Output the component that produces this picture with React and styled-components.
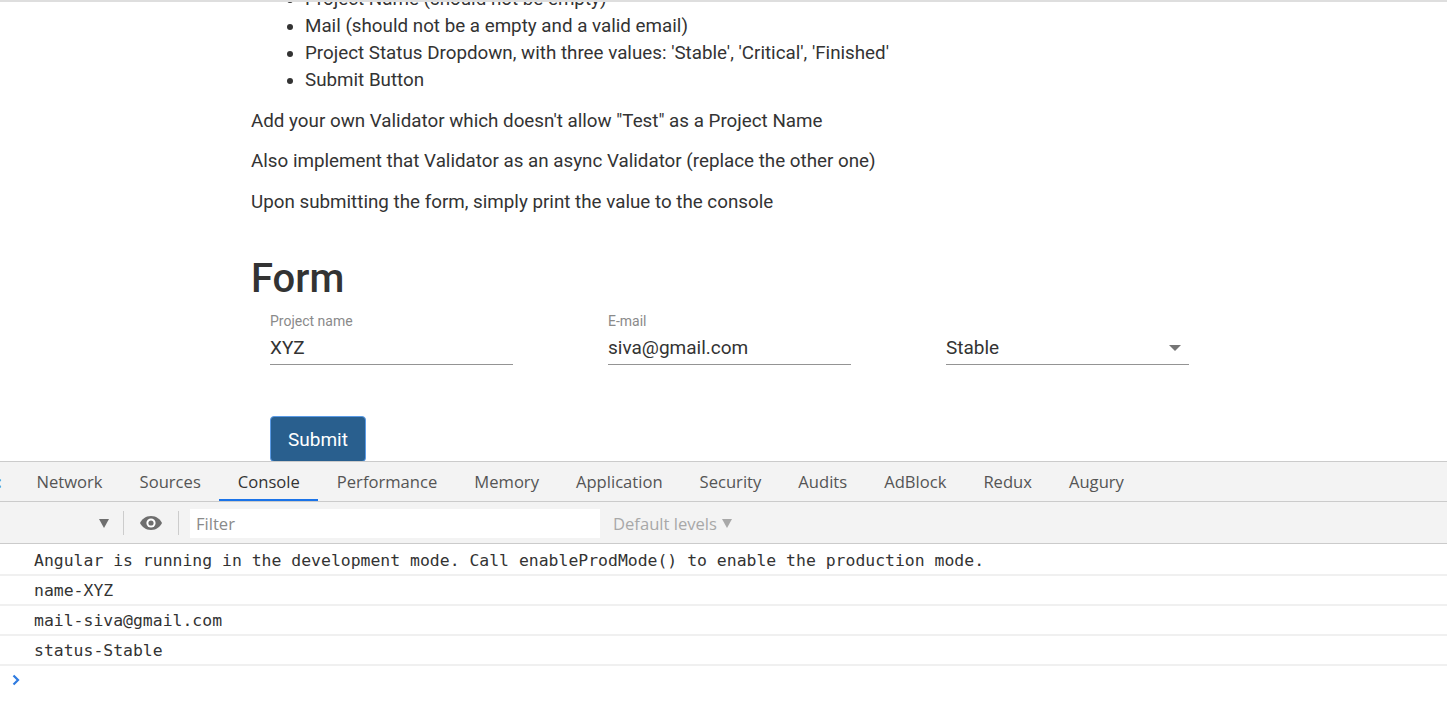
import React from "react";
import styled, { createGlobalStyle } from "styled-components";

const GlobalStyle = createGlobalStyle`
  html, body {
    margin: 0;
    padding: 0;
    background: #fff;
  }
  * {
    box-sizing: border-box;
  }
`;

const tabs = [
  "Network",
  "Sources",
  "Console",
  "Performance",
  "Memory",
  "Application",
  "Security",
  "Audits",
  "AdBlock",
  "Redux",
  "Augury",
];

const logs = [
  "Angular is running in the development mode. Call enableProdMode() to enable the production mode.",
  "name-XYZ",
  "mail-siva@gmail.com",
  "status-Stable",
];

const EyeIcon = () => (
  <svg width="24" height="16" viewBox="0 0 24 16">
    <path d="M12 1C6.5 1 2.6 4.6 1 8c1.6 3.4 5.5 7 11 7s9.4-3.6 11-7c-1.6-3.4-5.5-7-11-7z" fill="#6e6e6e" />
    <circle cx="12" cy="8" r="4.6" fill="#fff" />
    <circle cx="12" cy="8" r="2.6" fill="#6e6e6e" />
  </svg>
);

const App = () => {
  return (
    <Screen>
      <GlobalStyle />
      <PageView>
        <Content>
          <TaskList>
            <li>Project Name (should not be empty)</li>
            <li>Mail (should not be a empty and a valid email)</li>
            <li>Project Status Dropdown, with three values: 'Stable', 'Critical', 'Finished'</li>
            <li>Submit Button</li>
          </TaskList>
          <Para>Add your own Validator which doesn't allow "Test" as a Project Name</Para>
          <Para>Also implement that Validator as an async Validator (replace the other one)</Para>
          <Para>Upon submitting the form, simply print the value to the console</Para>
          <Heading>Form</Heading>
          <FieldRow>
            <Field>
              <Label>Project name</Label>
              <Value>XYZ</Value>
            </Field>
            <Field>
              <Label>E-mail</Label>
              <Value>siva@gmail.com</Value>
            </Field>
            <Field>
              <Label />
              <Value>
                Stable
                <Caret />
              </Value>
            </Field>
          </FieldRow>
          <SubmitBtn>Submit</SubmitBtn>
        </Content>
      </PageView>

      <DevTools>
        <TabBar>
          <CutIcon>:</CutIcon>
          {tabs.map((t) => (
            <Tab key={t} active={t === "Console"}>
              {t}
            </Tab>
          ))}
        </TabBar>
        <Toolbar>
          <ContextArrow />
          <Divider />
          <EyeBtn>
            <EyeIcon />
          </EyeBtn>
          <Divider />
          <FilterBox>Filter</FilterBox>
          <Levels>
            Default levels <LevelsArrow />
          </Levels>
        </Toolbar>
        <ConsoleList>
          {logs.map((l, i) => (
            <LogRow key={i}>{l}</LogRow>
          ))}
          <PromptRow>
            <svg width="10" height="12" viewBox="0 0 10 12">
              <path d="M2.5 1.5 L7 6 L2.5 10.5" stroke="#2f7be0" strokeWidth="2.2" fill="none" />
            </svg>
          </PromptRow>
        </ConsoleList>
      </DevTools>
    </Screen>
  );
};

export default App;

const Screen = styled.div`
  height: 723px;
  display: flex;
  flex-direction: column;
  overflow: hidden;
`;

const PageView = styled.div`
  height: 461px;
  flex-shrink: 0;
  overflow: hidden;
  border-top: 2px solid #dedede;
  font-family: Roboto, "Liberation Sans", sans-serif;
  color: #333;
`;

const Content = styled.div`
  margin-top: -16px;
  padding-left: 251px;
`;

const TaskList = styled.ul`
  margin: 0;
  padding-left: 54px;
  font-size: 18.8px;
  line-height: 27px;
`;

const Para = styled.p`
  margin: 13.5px 0 0;
  font-size: 18.8px;
  line-height: 27px;
`;

const Heading = styled.h1`
  margin: 39.5px 0 0;
  font-size: 40px;
  font-weight: 500;
  line-height: 48px;
`;

const FieldRow = styled.div`
  display: grid;
  grid-template-columns: repeat(3, 338px);
  padding-left: 19px;
  margin-top: 10px;
`;

const Field = styled.div`
  width: 243px;
  display: flex;
  flex-direction: column;
`;

const Label = styled.div`
  height: 16px;
  font-size: 14px;
  line-height: 16px;
  color: #8a8a8a;
`;

const Value = styled.div`
  position: relative;
  margin-top: 6px;
  padding-bottom: 4px;
  font-size: 19px;
  line-height: 25px;
  color: #333;
  border-bottom: 1px solid #949494;
`;

const Caret = styled.span`
  position: absolute;
  right: 8px;
  top: 10px;
  width: 0;
  height: 0;
  border-left: 6px solid transparent;
  border-right: 6px solid transparent;
  border-top: 6px solid #757575;
`;

const SubmitBtn = styled.button`
  margin: 51px 0 0 19px;
  width: 96px;
  height: 46px;
  border: 1px solid #5b9be6;
  border-radius: 4px;
  background: #295f8e;
  color: #fff;
  font-family: Roboto, "Liberation Sans", sans-serif;
  font-size: 19px;
  padding: 0;
`;

const DevTools = styled.div`
  flex: 1;
  display: flex;
  flex-direction: column;
  border-top: 1px solid #cbcbcb;
  font-family: "Open Sans", "Liberation Sans", sans-serif;
`;

const TabBar = styled.div`
  height: 40px;
  display: flex;
  align-items: stretch;
  background: #f3f3f3;
  border-bottom: 1px solid #cbcbcb;
`;

const CutIcon = styled.span`
  width: 21px;
  margin-left: -3px;
  display: flex;
  align-items: center;
  color: #4a7fc0;
  font-size: 16px;
  font-weight: 700;
`;

const Tab = styled.div`
  display: flex;
  align-items: center;
  padding: 2px 18.5px 0;
  font-size: 16.6px;
  color: ${(p) => (p.active ? "#333" : "#555")};
  border-bottom: 2px solid ${(p) => (p.active ? "#1a73e8" : "transparent")};
`;

const Toolbar = styled.div`
  height: 42px;
  display: flex;
  align-items: center;
  background: #f3f3f3;
  border-bottom: 1px solid #cbcbcb;
  padding: 1px 0 0 99px;
`;

const ContextArrow = styled.span`
  width: 0;
  height: 0;
  margin-right: 3px;
  border-left: 5px solid transparent;
  border-right: 5px solid transparent;
  border-top: 9px solid #6e6e6e;
`;

const Divider = styled.span`
  width: 1px;
  height: 24px;
  background: #ccc;
  margin: 0 11px;
`;

const EyeBtn = styled.span`
  display: flex;
  align-items: center;
  margin: 0 4px;
`;

const FilterBox = styled.div`
  width: 410px;
  height: 29px;
  background: #fff;
  display: flex;
  align-items: center;
  padding-left: 6px;
  font-size: 16.6px;
  color: #8a8a8a;
`;

const Levels = styled.div`
  margin-left: 13px;
  display: flex;
  align-items: center;
  gap: 5px;
  font-size: 16.6px;
  color: #a8a8a8;
`;

const LevelsArrow = styled.span`
  width: 0;
  height: 0;
  border-left: 5px solid transparent;
  border-right: 5px solid transparent;
  border-top: 9px solid #a8a8a8;
`;

const ConsoleList = styled.div`
  flex: 1;
  background: #fff;
  padding-top: 2px;
  font-family: "DejaVu Sans Mono", "Liberation Mono", monospace;
`;

const LogRow = styled.div`
  height: 30px;
  display: flex;
  align-items: center;
  padding-left: 34px;
  font-size: 16.45px;
  color: #333;
  border-bottom: 2px solid #f0f0f0;
  white-space: pre;
`;

const PromptRow = styled.div`
  height: 28px;
  display: flex;
  align-items: center;
  padding-left: 11px;
`;
